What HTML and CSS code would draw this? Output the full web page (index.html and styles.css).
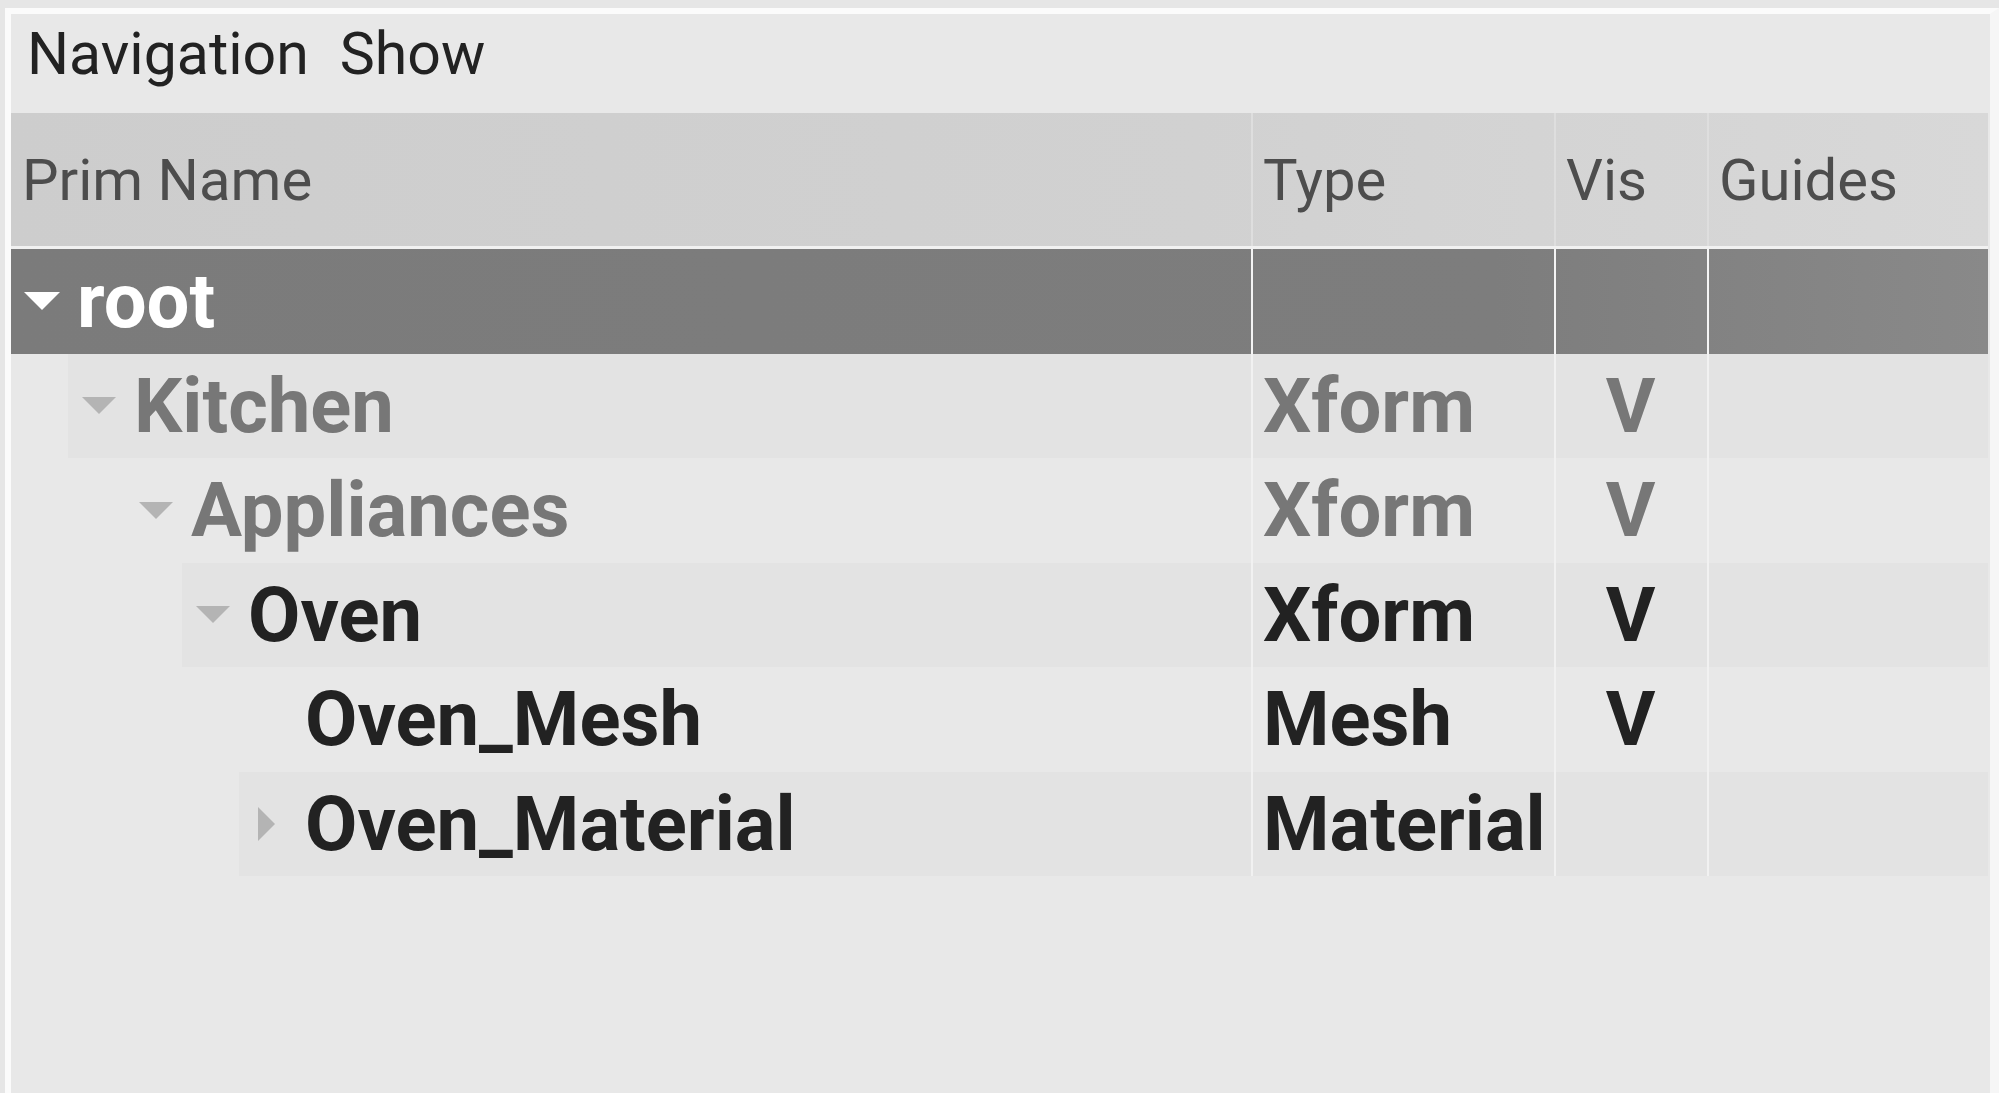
FILE: index.html
```html
<!DOCTYPE html>
<html>
<head>
<meta charset="utf-8">
<link rel="stylesheet" href="styles.css">
</head>
<body>
<div class="frame">
  <div class="menubar">
    <span class="menu-item">Navigation</span>
    <span class="menu-item">Show</span>
  </div>
  <div class="tree">
    <div class="header">
      <div class="hcell">Prim Name</div>
      <div class="hcell div">Type</div>
      <div class="hcell div">Vis</div>
      <div class="hcell div">Guides</div>
    </div>

    <div class="row selected">
      <div class="name"><div class="band l0"><span class="arrow down"></span><span class="label">root</span></div></div>
      <div class="cell"></div>
      <div class="cell vis"></div>
      <div class="cell"></div>
    </div>

    <div class="row alt dim">
      <div class="name"><div class="band l1"><span class="arrow down"></span><span class="label">Kitchen</span></div></div>
      <div class="cell">Xform</div>
      <div class="cell vis">V</div>
      <div class="cell"></div>
    </div>

    <div class="row dim">
      <div class="name"><div class="band l2"><span class="arrow down"></span><span class="label">Appliances</span></div></div>
      <div class="cell">Xform</div>
      <div class="cell vis">V</div>
      <div class="cell"></div>
    </div>

    <div class="row alt">
      <div class="name"><div class="band l3"><span class="arrow down"></span><span class="label">Oven</span></div></div>
      <div class="cell">Xform</div>
      <div class="cell vis">V</div>
      <div class="cell"></div>
    </div>

    <div class="row">
      <div class="name"><div class="band l4"><span class="arrow none"></span><span class="label">Oven_Mesh</span></div></div>
      <div class="cell">Mesh</div>
      <div class="cell vis">V</div>
      <div class="cell"></div>
    </div>

    <div class="row alt">
      <div class="name"><div class="band l4"><span class="arrow right"></span><span class="label">Oven_Material</span></div></div>
      <div class="cell">Material</div>
      <div class="cell vis"></div>
      <div class="cell"></div>
    </div>
  </div>
</div>
</body>
</html>
```

FILE: styles.css
```css
html, body {
  margin: 0;
  padding: 0;
}
body {
  background: #e6e6e6;
  width: 1999px;
  height: 1093px;
  overflow: hidden;
  font-family: Roboto, "Liberation Sans", sans-serif;
}
.frame {
  margin: 8px 0 0 5px;
  border-top: 6px solid #fbfbfb;
  border-left: 6px solid #fbfbfb;
  border-right: 9px solid #f6f6f6;
  background: #e8e8e8;
  height: 1079px;
  display: flex;
  flex-direction: column;
}
.menubar {
  height: 99px;
  box-sizing: border-box;
  padding: 6px 0 0 16px;
  display: flex;
  gap: 31px;
  align-items: flex-start;
  background: #e8e8e8;
}
.menu-item {
  font-size: 59px;
  line-height: 68px;
  color: #222;
}
.tree {
  margin-right: 2px;
  display: flex;
  flex-direction: column;
}
.header, .row {
  display: grid;
  grid-template-columns: 1240px 303px 153px 1fr;
}
.header {
  height: 136px;
  box-sizing: border-box;
  border-bottom: 3px solid #f1f1f1;
  background: linear-gradient(90deg, #cdcdcd 0%, #d1d1d1 60%, #d8d8d8 100%);
}
.hcell {
  display: flex;
  align-items: center;
  padding-left: 11px;
  font-size: 58px;
  color: #4d4d4d;
}
.hcell.div {
  border-left: 2px solid #dedede;
  padding-left: 10px;
}
.row {
  height: 104.5px;
  font-size: 76px;
  font-weight: bold;
  color: #222;
}
.row.dim {
  color: #777;
}
.cell {
  display: flex;
  align-items: center;
  border-left: 2px solid #f1f1f1;
  padding-left: 10px;
}
.cell.vis {
  justify-content: center;
  padding-left: 0;
  padding-right: 2px;
}
.name {
  display: flex;
}
.band {
  flex: 1;
  display: flex;
  align-items: center;
}
.l0 { margin-left: 0; }
.l1 { margin-left: 57px; }
.l2 { margin-left: 114px; }
.l3 { margin-left: 171px; }
.l4 { margin-left: 228px; }

.row.alt .band,
.row.alt .cell {
  background: #e3e3e3;
}
.row.selected {
  background: linear-gradient(90deg, #7b7b7b 0%, #7d7d7d 75%, #898989 100%);
  color: #fff;
}
.row.selected .cell {
  border-left-color: #f4f4f4;
}
.arrow {
  width: 34px;
  height: 34px;
  margin-left: 14px;
  margin-right: 18px;
  display: flex;
  align-items: center;
  justify-content: center;
  flex: none;
}
.arrow.down::before {
  content: "";
  border-left: 17px solid transparent;
  border-right: 17px solid transparent;
  border-top: 17px solid #b4b4b4;
}
.row.selected .arrow.down::before {
  border-left-width: 18px;
  border-right-width: 18px;
  border-top: 18px solid #ffffff;
}
.arrow.right::before {
  content: "";
  margin-right: 7px;
  border-top: 17px solid transparent;
  border-bottom: 17px solid transparent;
  border-left: 17px solid #b4b4b4;
}
.label {
  white-space: nowrap;
  line-height: 1;
}
```
